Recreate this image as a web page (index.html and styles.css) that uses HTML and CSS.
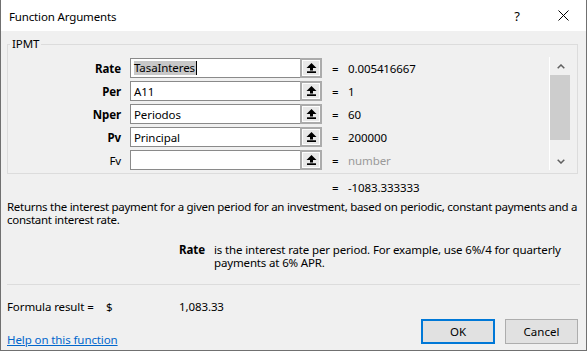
FILE: index.html
```html
<!DOCTYPE html>
<html>
<head>
<meta charset="utf-8">
<title>Function Arguments</title>
<link rel="stylesheet" href="styles.css">
</head>
<body>
<div class="window">
  <div class="titlebar">
    <span class="title">Function Arguments</span>
    <span class="help-btn">?</span>
    <span class="close-btn">
      <svg width="11" height="11" viewBox="0 0 11 11"><path d="M0.5 0.5 L10.5 10.5 M10.5 0.5 L0.5 10.5" stroke="#000" stroke-width="1" fill="none"/></svg>
    </span>
  </div>
  <div class="content">
    <fieldset class="group">
      <legend class="legend">IPMT</legend>
      <div class="args">
        <div class="arg-grid">
          <div class="lbl req">Rate</div>
          <div class="field"><span class="sel">TasaInteres</span><span class="caret"></span></div>
          <div class="ref"><svg width="11" height="10" viewBox="0 0 11 10"><path d="M5.5 0 L10.5 5 H7 V7.5 H4 V5 H0.5 Z" fill="#000"/><rect x="1" y="8.3" width="9" height="1.7" fill="#000"/></svg></div>
          <div class="eq">=</div>
          <div class="val">0.005416667</div>

          <div class="lbl req">Per</div>
          <div class="field">A11</div>
          <div class="ref"><svg width="11" height="10" viewBox="0 0 11 10"><path d="M5.5 0 L10.5 5 H7 V7.5 H4 V5 H0.5 Z" fill="#000"/><rect x="1" y="8.3" width="9" height="1.7" fill="#000"/></svg></div>
          <div class="eq">=</div>
          <div class="val">1</div>

          <div class="lbl req">Nper</div>
          <div class="field">Periodos</div>
          <div class="ref"><svg width="11" height="10" viewBox="0 0 11 10"><path d="M5.5 0 L10.5 5 H7 V7.5 H4 V5 H0.5 Z" fill="#000"/><rect x="1" y="8.3" width="9" height="1.7" fill="#000"/></svg></div>
          <div class="eq">=</div>
          <div class="val">60</div>

          <div class="lbl req">Pv</div>
          <div class="field">Principal</div>
          <div class="ref"><svg width="11" height="10" viewBox="0 0 11 10"><path d="M5.5 0 L10.5 5 H7 V7.5 H4 V5 H0.5 Z" fill="#000"/><rect x="1" y="8.3" width="9" height="1.7" fill="#000"/></svg></div>
          <div class="eq">=</div>
          <div class="val">200000</div>

          <div class="lbl">Fv</div>
          <div class="field"></div>
          <div class="ref"><svg width="11" height="10" viewBox="0 0 11 10"><path d="M5.5 0 L10.5 5 H7 V7.5 H4 V5 H0.5 Z" fill="#000"/><rect x="1" y="8.3" width="9" height="1.7" fill="#000"/></svg></div>
          <div class="eq">=</div>
          <div class="val muted">number</div>
        </div>
        <div class="scrollbar">
          <div class="sb-arrow sb-up"><svg width="8" height="5" viewBox="0 0 8 5"><path d="M0.7 4.3 L4 1 L7.3 4.3" stroke="#606060" stroke-width="1.5" fill="none"/></svg></div>
          <div class="sb-thumb"></div>
          <div class="sb-track"></div>
          <div class="sb-arrow sb-down"><svg width="8" height="5" viewBox="0 0 8 5"><path d="M0.7 0.7 L4 4 L7.3 0.7" stroke="#606060" stroke-width="1.5" fill="none"/></svg></div>
        </div>
      </div>
    </fieldset>

    <div class="result"><span class="eq">=</span><span class="val">-1083.333333</span></div>

    <p class="desc">Returns the interest payment for a given period for an investment, based on periodic, constant payments and a constant interest rate.</p>

    <div class="argdesc">
      <span class="argname">Rate</span>
      <p class="argtext">is the interest rate per period. For example, use 6%/4 for quarterly payments at 6% APR.</p>
    </div>

    <div class="sep"></div>

    <div class="formula">
      <span class="f-label">Formula result =</span>
      <span class="f-cur">$</span>
      <span class="f-val">1,083.33</span>
    </div>

    <div class="footer">
      <a class="helplink" href="#">Help on this function</a>
      <div class="buttons">
        <button class="btn btn-default">OK</button>
        <button class="btn">Cancel</button>
      </div>
    </div>
  </div>
</div>
</body>
</html>
```

FILE: styles.css
```css
* { box-sizing: border-box; }
html, body { margin: 0; padding: 0; background: #f0f0f0; }
body {
  font-family: "Noto Sans", "Open Sans", sans-serif;
  font-size: 11.5px;
  letter-spacing: -0.1px;
  color: #000;
}

.window {
  width: 587px;
  height: 351px;
  border: 1px solid #707070;
  border-top: none;
  background: #f0f0f0;
  display: flex;
  flex-direction: column;
}

.titlebar {
  height: 31px;
  background: #fff;
  display: flex;
  align-items: center;
  padding-left: 8px;
}
.title { flex: 1; padding-top: 1px; font-size: 11.5px; letter-spacing: -0.15px; }
.help-btn { font-size: 13px; width: 12px; margin-right: 35px; text-align: center; }
.close-btn { width: 11px; height: 11px; margin-right: 17px; display: flex; }

.content {
  flex: 1;
  padding: 0 8px 0 6px;
  display: flex;
  flex-direction: column;
}

.group {
  margin: 6px 0 0 0;
  padding: 7px 0 3px 0;
  border: 1px solid #dcdcdc;
  min-width: 0;
}
.legend {
  padding: 0 2px;
  margin-left: 2px;
  line-height: 14px;
}

.args { display: flex; }
.arg-grid {
  flex: 1;
  display: grid;
  grid-template-columns: 113px 179px 22px 26px 1fr;
  grid-auto-rows: 20px;
  row-gap: 3px;
  column-gap: 0;
  align-items: center;
}
.lbl { justify-self: end; }
.req { font-weight: bold; }
.field {
  height: 20px;
  margin-left: 9px;
  width: 170px;
  background: #fff;
  border: 1px solid #8a8a8a;
  border-right: none;
  padding: 0 3px;
  display: flex;
  align-items: center;
  white-space: nowrap;
}
.sel { background: #c8c8c8; line-height: 14px; padding: 0 1px 0 0; }
.caret { display: inline-block; width: 1px; height: 14px; background: #000; }
.ref {
  height: 20px;
  width: 22px;
  border: 2px solid #ababab;
  background: #e8e8e8;
  box-shadow: inset 0 0 0 1px #fdfdfd;
  display: flex;
  align-items: center;
  justify-content: center;
}
.eq { padding-left: 10px; }
.muted { color: #9a9a9a; }

.scrollbar {
  width: 22px;
  margin: -1px 6px 0 0;
  height: 113px;
  border-left: 1px solid #fff;
  display: flex;
  flex-direction: column;
}
.sb-arrow { display: flex; align-items: center; justify-content: center; }
.sb-up { height: 18px; }
.sb-down { height: 17px; }
.sb-thumb { height: 65px; background: #cdcdcd; margin-right: 1px; }
.sb-track { flex: 1; }

.result {
  margin-top: 6px;
  line-height: 15px;
  display: flex;
  padding-left: 315px;
}
.result .eq { width: 26px; }

.desc {
  margin: 5px -5px 0 0;
  line-height: 13px;
  letter-spacing: -0.28px;
}

.argdesc {
  margin-top: 17px;
  display: flex;
  line-height: 13px;
}
.argname { font-weight: bold; flex: 0 0 198px; text-align: right; }
.argtext { margin: 0 0 0 9px; flex: 1; min-width: 0; letter-spacing: -0.15px; }

.sep {
  margin-top: 15px;
  height: 1px;
  background: #dcdcdc;
  margin-right: -2px;
}

.formula {
  margin-top: 14px;
  line-height: 15px;
  display: flex;
}
.f-label { width: 99px; }
.f-cur { width: 73px; }

.footer {
  margin-top: 5px;
  display: flex;
  align-items: flex-end;
  justify-content: space-between;
}
.helplink { color: #0066cc; text-decoration: underline; line-height: 14px; margin-bottom: -3px; }
.buttons { display: flex; gap: 10px; }
.btn {
  font-family: inherit;
  font-size: 11.5px;
  height: 25px;
  width: 73px;
  background: #e1e1e1;
  border: 1px solid #adadad;
  padding: 0;
  color: #000;
}
.btn-default { border: 2px solid #0078d7; width: 74px; }
```
